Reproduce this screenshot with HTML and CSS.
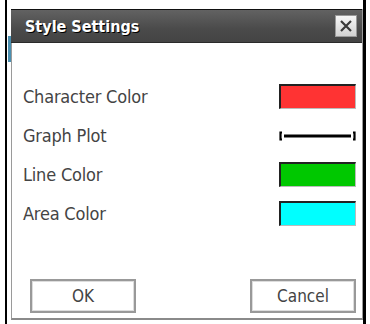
FILE: index.html
```html
<!DOCTYPE html>
<html lang="en">
<head>
    <meta charset="UTF-8">
    <title>Style Settings</title>
    <link rel="stylesheet" href="styles.css">
</head>
<body>

<div class="screen">
    <div class="side-strip"></div>

    <div class="dialog">
        <div class="title-bar">
            <span class="title">Style Settings</span>
            <button class="close-btn" aria-label="Close">
                <svg width="14" height="14" viewBox="0 0 14 14">
                    <path d="M2 2 L12 12 M12 2 L2 12" stroke="#3a3a3a" stroke-width="2.2" fill="none"/>
                </svg>
            </button>
        </div>

        <div class="content">
            <div class="row">
                <span class="label">Character Color</span>
                <span class="swatch swatch-red"></span>
            </div>
            <div class="row">
                <span class="label">Graph Plot</span>
                <svg class="plot" width="77" height="10" viewBox="0 0 77 10">
                    <path d="M3 1.5 H1.5 V8.5 H3" stroke="#000" stroke-width="2.2" fill="none"/>
                    <path d="M74 1.5 H75.5 V8.5 H74" stroke="#000" stroke-width="2.2" fill="none"/>
                    <line x1="5" y1="5" x2="72" y2="5" stroke="#000" stroke-width="3"/>
                </svg>
            </div>
            <div class="row">
                <span class="label">Line Color</span>
                <span class="swatch swatch-green"></span>
            </div>
            <div class="row">
                <span class="label">Area Color</span>
                <span class="swatch swatch-cyan"></span>
            </div>

            <div class="buttons">
                <button class="btn">OK</button>
                <button class="btn">Cancel</button>
            </div>
        </div>
    </div>
</div>

</body>
</html>
```

FILE: styles.css
```css
body {
    margin: 0;
    padding: 0;
    background-color: #fff;
    font-family: "DejaVu Sans Condensed", "DejaVu Sans", sans-serif;
}

.screen {
    display: flex;
    margin-left: 5px;
    width: 356px;
    height: 324px;
    border-left: 2px solid #000;
    border-right: 3px solid #000;
    position: relative;
}

.side-strip {
    position: absolute;
    left: 1px;
    top: 36px;
    width: 3px;
    height: 26px;
    background-color: #4a8fb0;
}

.dialog {
    margin: 9px 0 4px 4px;
    flex: 1;
    display: flex;
    flex-direction: column;
    border-left: 1px solid #9a9a9a;
    border-right: 1px solid #9a9a9a;
    border-bottom: 2px solid #8a8a8a;
    background-color: #fff;
}

.title-bar {
    height: 32px;
    display: flex;
    align-items: center;
    justify-content: space-between;
    padding: 0 5px 0 14px;
    background: linear-gradient(#626262, #4a4a4a 60%, #444);
    border-top: 1px solid #111;
    border-bottom: 1px solid #2a2a2a;
    margin-left: -1px;
}

.title {
    color: #fff;
    font-weight: bold;
    font-size: 16px;
    text-shadow: 1px 1px 0 #000;
}

.close-btn {
    width: 22px;
    height: 22px;
    padding: 0;
    display: flex;
    align-items: center;
    justify-content: center;
    background: linear-gradient(#f6f6f6, #d2d2d2);
    border: 1px solid #999;
}

.content {
    flex: 1;
    display: flex;
    flex-direction: column;
    padding: 34px 6px 5px 11px;
}

.row {
    height: 39px;
    display: flex;
    align-items: center;
    justify-content: space-between;
}

.label {
    color: #444;
    font-size: 18px;
    letter-spacing: -0.2px;
}

.swatch {
    width: 74px;
    height: 22px;
    border-top: 2px solid #222;
    border-left: 2px solid #222;
    border-right: 1px solid #bbb;
    border-bottom: 1px solid #bbb;
}

.swatch-red {
    background-color: #ff3333;
}

.swatch-green {
    background-color: #00c800;
}

.swatch-cyan {
    background-color: #00ffff;
}

.buttons {
    margin-top: auto;
    display: flex;
    justify-content: space-between;
    padding-left: 7px;
}

.btn {
    width: 106px;
    height: 34px;
    background-color: #fff;
    border: 2px solid #999;
    box-shadow: inset 0 0 0 1px #ddd;
    color: #444;
    font-family: "DejaVu Sans Condensed", "DejaVu Sans", sans-serif;
    font-size: 17px;
}
```
